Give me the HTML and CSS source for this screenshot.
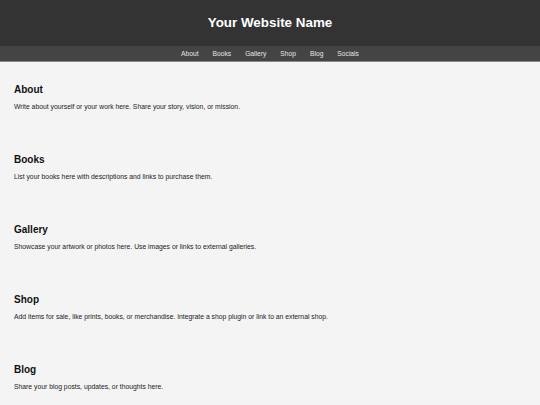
FILE: index.html
```html
<!DOCTYPE html>
<html lang="en">
<head>
<meta charset="utf-8">
<title>Your Website Name</title>
<link rel="stylesheet" href="styles.css">
</head>
<body>
<header class="site-header">
  <h1 class="site-title">Your Website Name</h1>
</header>
<nav class="site-nav">
  <a href="#about">About</a>
  <a href="#books">Books</a>
  <a href="#gallery">Gallery</a>
  <a href="#shop">Shop</a>
  <a href="#blog">Blog</a>
  <a href="#socials">Socials</a>
</nav>
<main class="content">
  <section class="section" id="about">
    <h2>About</h2>
    <p>Write about yourself or your work here. Share your story, vision, or mission.</p>
  </section>
  <section class="section" id="books">
    <h2>Books</h2>
    <p>List your books here with descriptions and links to purchase them.</p>
  </section>
  <section class="section" id="gallery">
    <h2>Gallery</h2>
    <p>Showcase your artwork or photos here. Use images or links to external galleries.</p>
  </section>
  <section class="section" id="shop">
    <h2>Shop</h2>
    <p>Add items for sale, like prints, books, or merchandise. Integrate a shop plugin or link to an external shop.</p>
  </section>
  <section class="section" id="blog">
    <h2>Blog</h2>
    <p>Share your blog posts, updates, or thoughts here.</p>
  </section>
</main>
</body>
</html>
```
FILE: styles.css
```css
html, body {
  margin: 0;
  padding: 0;
}
body {
  background: #f4f4f4;
  font-family: "Liberation Sans", Arial, sans-serif;
  color: #222;
}
.site-header {
  background: #333;
  height: 46px;
  display: flex;
  align-items: center;
  justify-content: center;
}
.site-title {
  margin: 0;
  color: #fff;
  font-size: 13.4px;
  font-weight: bold;
  line-height: 16px;
}
.site-nav {
  background: #444;
  height: 15px;
  border-bottom: 1px solid #8a8a8a;
  display: flex;
  align-items: center;
  justify-content: center;
}
.site-nav a {
  color: #e6e6e6;
  text-decoration: none;
  font-size: 6.7px;
  line-height: 8px;
  padding: 0 7px;
}
.content {
  padding: 22px 14px 0;
}
.section {
  margin-bottom: 43.5px;
}
.section h2 {
  margin: 0 0 6.5px;
  font-size: 10px;
  line-height: 12px;
  font-weight: bold;
  color: #111;
}
.section p {
  margin: 0;
  font-size: 6.8px;
  line-height: 8px;
  color: #222;
}
```
